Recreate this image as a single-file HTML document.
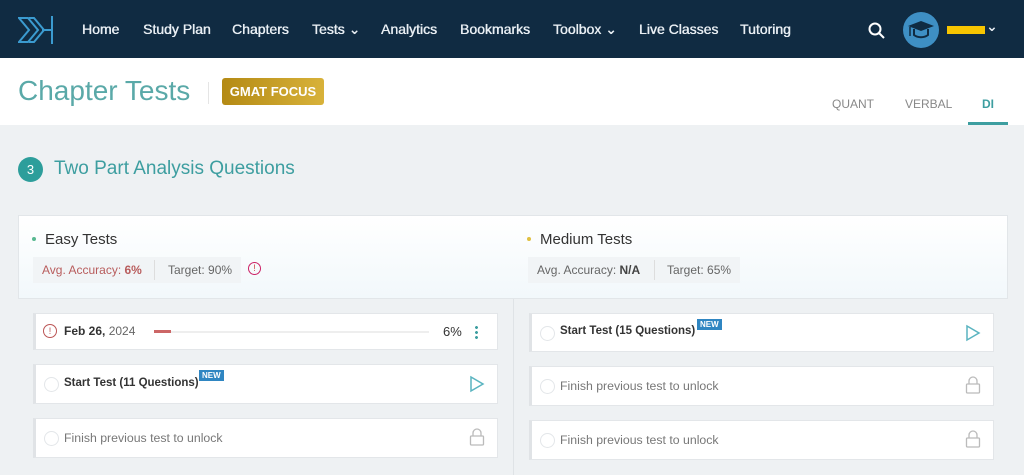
<!DOCTYPE html>
<html><head><style>
*{box-sizing:border-box;margin:0;padding:0}
body{width:1024px;height:475px;overflow:hidden;font-family:"Liberation Sans",sans-serif;background:#eef1f3;position:relative}
.a{position:absolute}
.nav{left:0;top:0;width:1024px;height:58px;background:#102b42}
.nav span{position:absolute;top:21px;color:#e8eef3;font-size:14px;text-shadow:0 0 0.4px #e8eef3,0.3px 0 0 #e8eef3}
.hdr{left:0;top:58px;width:1024px;height:67px;background:#fff}
.row{position:absolute;background:#fff;border:1px solid #e3e6e9;border-left:3px solid #e0e3e6}
.circ{position:absolute;left:8px;width:15px;height:15px;border:1px solid #e3e6e9;border-radius:50%}
.t{position:absolute;font-size:12px}
.new{position:absolute;background:#2f86c2;color:#fff;font-size:8px;font-weight:bold;padding:1px 3px}
</style></head><body>
<div class="a nav">
<svg class="a" style="left:18px;top:15px" width="36" height="30" viewBox="0 0 36 30"><g fill="none" stroke="#3b9bd0" stroke-width="2"><path d="M1 3h9l10 12-10 12H1l10-12z"/><path d="M11 3h5l10 12-10 12h-5"/><path d="M24 15h10M34 1v28"/></g></svg>
<span style="left:82px">Home</span><span style="left:143px">Study Plan</span><span style="left:232px">Chapters</span><span style="left:312px">Tests ⌄</span><span style="left:381px">Analytics</span><span style="left:460px">Bookmarks</span><span style="left:553px">Toolbox ⌄</span><span style="left:639px">Live Classes</span><span style="left:740px">Tutoring</span>
<svg class="a" style="left:868px;top:22px" width="18" height="18"><circle cx="7" cy="7" r="5.5" fill="none" stroke="#fff" stroke-width="2"/><path d="M11 11l5 5" stroke="#fff" stroke-width="2"/></svg>
<div class="a" style="left:903px;top:12px;width:36px;height:36px;border-radius:50%;background:#3e8fc4"></div>
<svg class="a" style="left:906px;top:18px" width="30" height="24"><path d="M2 8l13-5 13 5-13 5z" fill="#102b42"/><path d="M8 11v6c4 3 10 3 14 0v-6" fill="none" stroke="#102b42" stroke-width="2"/><path d="M4 9v9" stroke="#102b42" stroke-width="1.5"/></svg>
<div class="a" style="left:947px;top:26px;width:38px;height:8px;background:#f7c500"></div>
<span style="left:986px;top:18px">⌄</span>
</div>
<div class="a hdr"></div>
<div class="a" style="left:18px;top:75px;font-size:28px;color:#5aa9a8">Chapter Tests</div>
<div class="a" style="left:208px;top:82px;width:1px;height:22px;background:#e5e5e5"></div>
<div class="a" style="left:222px;top:78px;width:102px;height:27px;border-radius:3px;background:linear-gradient(90deg,#b48a14,#d8b23a);color:#fff;font-size:13px;font-weight:bold;text-align:center;line-height:27px">GMAT FOCUS</div>
<div class="a" style="left:832px;top:97px;font-size:12px;color:#888">QUANT</div>
<div class="a" style="left:905px;top:97px;font-size:12px;color:#888">VERBAL</div>
<div class="a" style="left:982px;top:97px;font-size:12px;color:#3d9ea0;font-weight:bold">DI</div>
<div class="a" style="left:968px;top:122px;width:40px;height:3px;background:#3d9ea0"></div>
<div class="a" style="left:18px;top:157px;width:25px;height:25px;border-radius:50%;background:#2d9e9b;color:#fff;font-size:13px;text-align:center;line-height:25px">3</div>
<div class="a" style="left:54px;top:158px;font-size:19px;color:#3d9ea0">Two Part Analysis Questions</div>
<div class="a" style="left:18px;top:215px;width:990px;height:84px;background:linear-gradient(180deg,#fff,#f2f8fb);border:1px solid #e2e6e9"></div>
<div class="a" style="left:513px;top:299px;width:1px;height:176px;background:#dfe3e6"></div>
<div class="a" style="left:32px;top:237px;width:4px;height:4px;border-radius:50%;background:#58b890"></div>
<div class="a" style="left:45px;top:231px;font-size:15px;color:#333">Easy Tests</div>
<div class="a" style="left:33px;top:257px;width:208px;height:26px;background:#f1f4f6"></div>
<div class="t" style="left:42px;top:263px;color:#b85c5c">Avg. Accuracy: <b>6%</b></div>
<div class="a" style="left:154px;top:260px;width:1px;height:20px;background:#ddd"></div>
<div class="t" style="left:168px;top:263px;color:#666">Target: 90%</div>
<div class="a" style="left:248px;top:262px;width:13px;height:13px;border:1px solid #c26;border-radius:50%;color:#c44;font-size:9px;text-align:center;line-height:11px">!</div>
<div class="a" style="left:527px;top:237px;width:4px;height:4px;border-radius:50%;background:#e0c040"></div>
<div class="a" style="left:540px;top:231px;font-size:15px;color:#333">Medium Tests</div>
<div class="a" style="left:528px;top:257px;width:212px;height:26px;background:#f1f4f6"></div>
<div class="t" style="left:537px;top:263px;color:#666">Avg. Accuracy: <b style="color:#444">N/A</b></div>
<div class="a" style="left:654px;top:260px;width:1px;height:20px;background:#ddd"></div>
<div class="t" style="left:667px;top:263px;color:#666">Target: 65%</div>

<div class="row" style="left:33px;top:313px;width:465px;height:37px">
<div class="a" style="left:7px;top:10px;width:14px;height:14px;border:1px solid #b55;border-radius:50%;color:#b55;font-size:9px;text-align:center;line-height:12px">!</div>
<div class="t" style="left:28px;top:10px;color:#333"><b>Feb 26,</b> <span style="color:#666">2024</span></div>
<div class="a" style="left:118px;top:17px;width:275px;height:2px;background:#eee"></div>
<div class="a" style="left:118px;top:16px;width:17px;height:3px;background:#c66"></div>
<div class="t" style="left:407px;top:10px;color:#333;font-size:13px">6%</div>
<div class="a" style="left:439px;top:11px;width:3px;height:14px;background:radial-gradient(circle,#3d9ea0 1.3px,transparent 1.6px) 0 0/3px 5px"></div>
</div>
<div class="row" style="left:33px;top:364px;width:465px;height:40px">
<div class="circ" style="top:12px"></div><div class="t" style="left:28px;top:12px;color:#333;font-weight:bold;font-size:11.5px">Start Test (11 Questions)</div>
<div class="new" style="left:163px;top:5px">NEW</div>
<svg class="a" style="left:433px;top:10px" width="16" height="18"><path d="M2 2l12 7-12 7z" fill="none" stroke="#5ab4c0" stroke-width="1.5"/></svg>
</div>
<div class="row" style="left:33px;top:418px;width:465px;height:40px">
<div class="circ" style="top:12px"></div><div class="t" style="left:28px;top:12px;color:#777;font-size:12.3px">Finish previous test to unlock</div>
<svg class="a" style="left:433px;top:9px" width="16" height="18"><path d="M4 8V5a4 4 0 018 0v3" fill="none" stroke="#bbb" stroke-width="1.3"/><rect x="1.5" y="8" width="13" height="9" rx="1" fill="none" stroke="#bbb" stroke-width="1.3"/></svg>
</div>

<div class="row" style="left:529px;top:313px;width:465px;height:39px">
<div class="circ" style="top:12px"></div><div class="t" style="left:28px;top:11px;color:#333;font-weight:bold;font-size:11.5px">Start Test (15 Questions)</div>
<div class="new" style="left:165px;top:5px">NEW</div>
<svg class="a" style="left:433px;top:10px" width="16" height="18"><path d="M2 2l12 7-12 7z" fill="none" stroke="#5ab4c0" stroke-width="1.5"/></svg>
</div>
<div class="row" style="left:529px;top:366px;width:465px;height:40px">
<div class="circ" style="top:12px"></div><div class="t" style="left:28px;top:12px;color:#777;font-size:12.3px">Finish previous test to unlock</div>
<svg class="a" style="left:433px;top:9px" width="16" height="18"><path d="M4 8V5a4 4 0 018 0v3" fill="none" stroke="#bbb" stroke-width="1.3"/><rect x="1.5" y="8" width="13" height="9" rx="1" fill="none" stroke="#bbb" stroke-width="1.3"/></svg>
</div>
<div class="row" style="left:529px;top:420px;width:465px;height:40px">
<div class="circ" style="top:12px"></div><div class="t" style="left:28px;top:12px;color:#777;font-size:12.3px">Finish previous test to unlock</div>
<svg class="a" style="left:433px;top:9px" width="16" height="18"><path d="M4 8V5a4 4 0 018 0v3" fill="none" stroke="#bbb" stroke-width="1.3"/><rect x="1.5" y="8" width="13" height="9" rx="1" fill="none" stroke="#bbb" stroke-width="1.3"/></svg>
</div>
</body></html>
